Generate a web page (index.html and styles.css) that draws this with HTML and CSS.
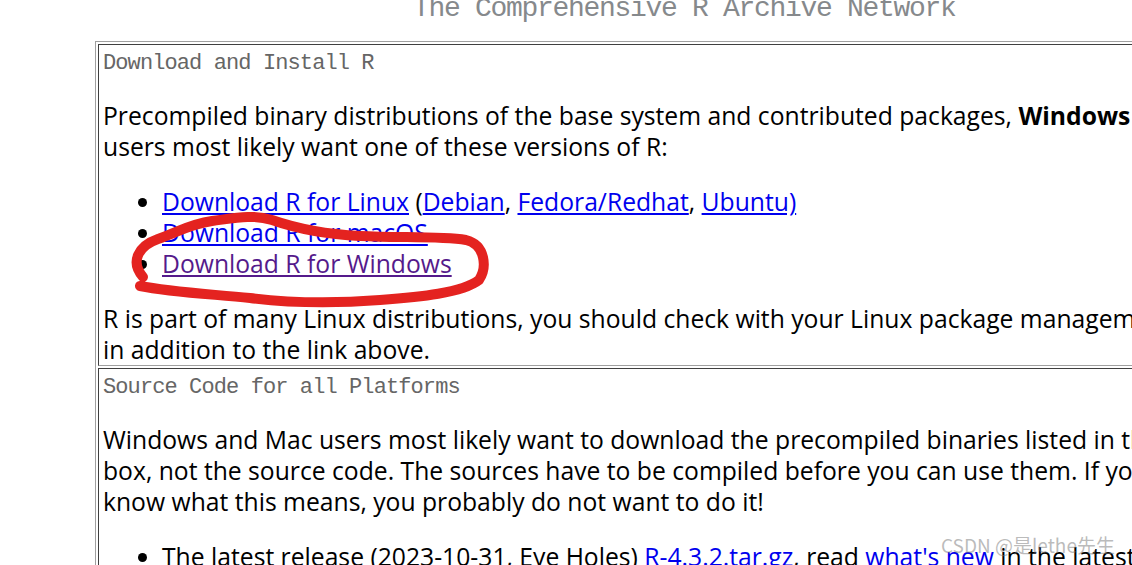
FILE: index.html
```html
<!DOCTYPE html>
<html lang="en">
<head>
    <meta charset="UTF-8">
    <title>The Comprehensive R Archive Network</title>
    <link rel="stylesheet" href="styles.css">
</head>
<body>

    <h1 class="site-title">The Comprehensive R Archive Network</h1>

    <table class="frame">
        <tr>
            <td class="box">
                <h2 class="box-title">Download and Install R</h2>
                <p>Precompiled binary distributions of the base system and contributed packages, <strong>Windows and Mac</strong> users most likely want one of these versions of R:</p>
                <ul>
                    <li><a href="#">Download R for Linux</a> (<a href="#">Debian</a>, <a href="#">Fedora/Redhat</a>, <a href="#">Ubuntu)</a></li>
                    <li><a href="#">Download R for macOS</a></li>
                    <li><a href="#" class="visited">Download R for Windows</a></li>
                </ul>
                <p class="last">R is part of many Linux distributions, you should check with your Linux package management system in addition to the link above.</p>
            </td>
        </tr>
        <tr>
            <td class="box">
                <h2 class="box-title">Source Code for all Platforms</h2>
                <p>Windows and Mac users most likely want to download the precompiled binaries listed in the upper box, not the source code. The sources have to be compiled before you can use them. If you do not know what this means, you probably do not want to do it!</p>
                <ul>
                    <li>The latest release (2023-10-31, Eye Holes) <a href="#">R-4.3.2.tar.gz</a>, read <a href="#">what's new</a> in the latest version.</li>
                </ul>
            </td>
        </tr>
    </table>

    <!-- hand-drawn marker over the screenshot -->
    <svg class="scribble" width="1132" height="565" viewBox="0 0 1132 565">
        <path d="M143 277 C 130 262, 138 246, 158 239 C 178 232, 190 224, 212 221 C 235 218, 252 214, 272 220 C 295 228, 320 234, 360 236 C 400 238, 440 236, 466 240 C 486 245, 487 268, 479 280 C 462 293, 420 297, 380 300 C 330 304, 290 303, 250 298 C 210 294, 170 292, 140 286"
              fill="none" stroke="#e42320" stroke-width="10" stroke-linecap="round" stroke-linejoin="round"/>
    </svg>

    <div class="watermark">CSDN @是lethe先生</div>

</body>
</html>
```

FILE: styles.css
```css
body {
    margin: 0;
    width: 1132px;
    height: 565px;
    overflow: hidden;
    position: relative;
    background: #fff;
    font-family: "Open Sans", sans-serif;
    color: #000;
}

.site-title {
    margin: -4px 0 0 413px;
    font-family: "Liberation Mono", monospace;
    font-size: 28px;
    font-weight: normal;
    letter-spacing: -1.3px;
    line-height: 26px;
    color: #86898c;
    white-space: nowrap;
}

.frame {
    margin: 19px 0 0 95px;
    width: 1185px;
    border: 1px solid;
    border-color: #a0a0a0 #404040 #404040 #a0a0a0;
    border-spacing: 2px;
}

.box {
    padding: 4px 4px 0 4px;
    border: 1px solid;
    border-color: #404040 #a0a0a0 #a0a0a0 #404040;
    font-size: 24.7px;
    line-height: 31px;
    vertical-align: top;
}

.box-title {
    margin: 0;
    font-family: "Liberation Mono", monospace;
    font-size: 22px;
    font-weight: normal;
    letter-spacing: -0.9px;
    line-height: 30px;
    color: #666;
}

.box p {
    margin: 21px 0 24px;
}

.box p.last {
    margin-bottom: 0;
}

.box ul {
    margin: 24px 0;
    padding-left: 59px;
}

.box a {
    color: #0000ee;
}

.box a.visited {
    color: #551a8b;
}

.scribble {
    position: absolute;
    left: 0;
    top: 0;
    pointer-events: none;
}

.watermark {
    position: absolute;
    left: 941px;
    top: 531px;
    font-family: "Noto Sans CJK SC", sans-serif;
    font-size: 19px;
    color: rgba(120, 120, 120, 0.5);
    white-space: nowrap;
}
```
